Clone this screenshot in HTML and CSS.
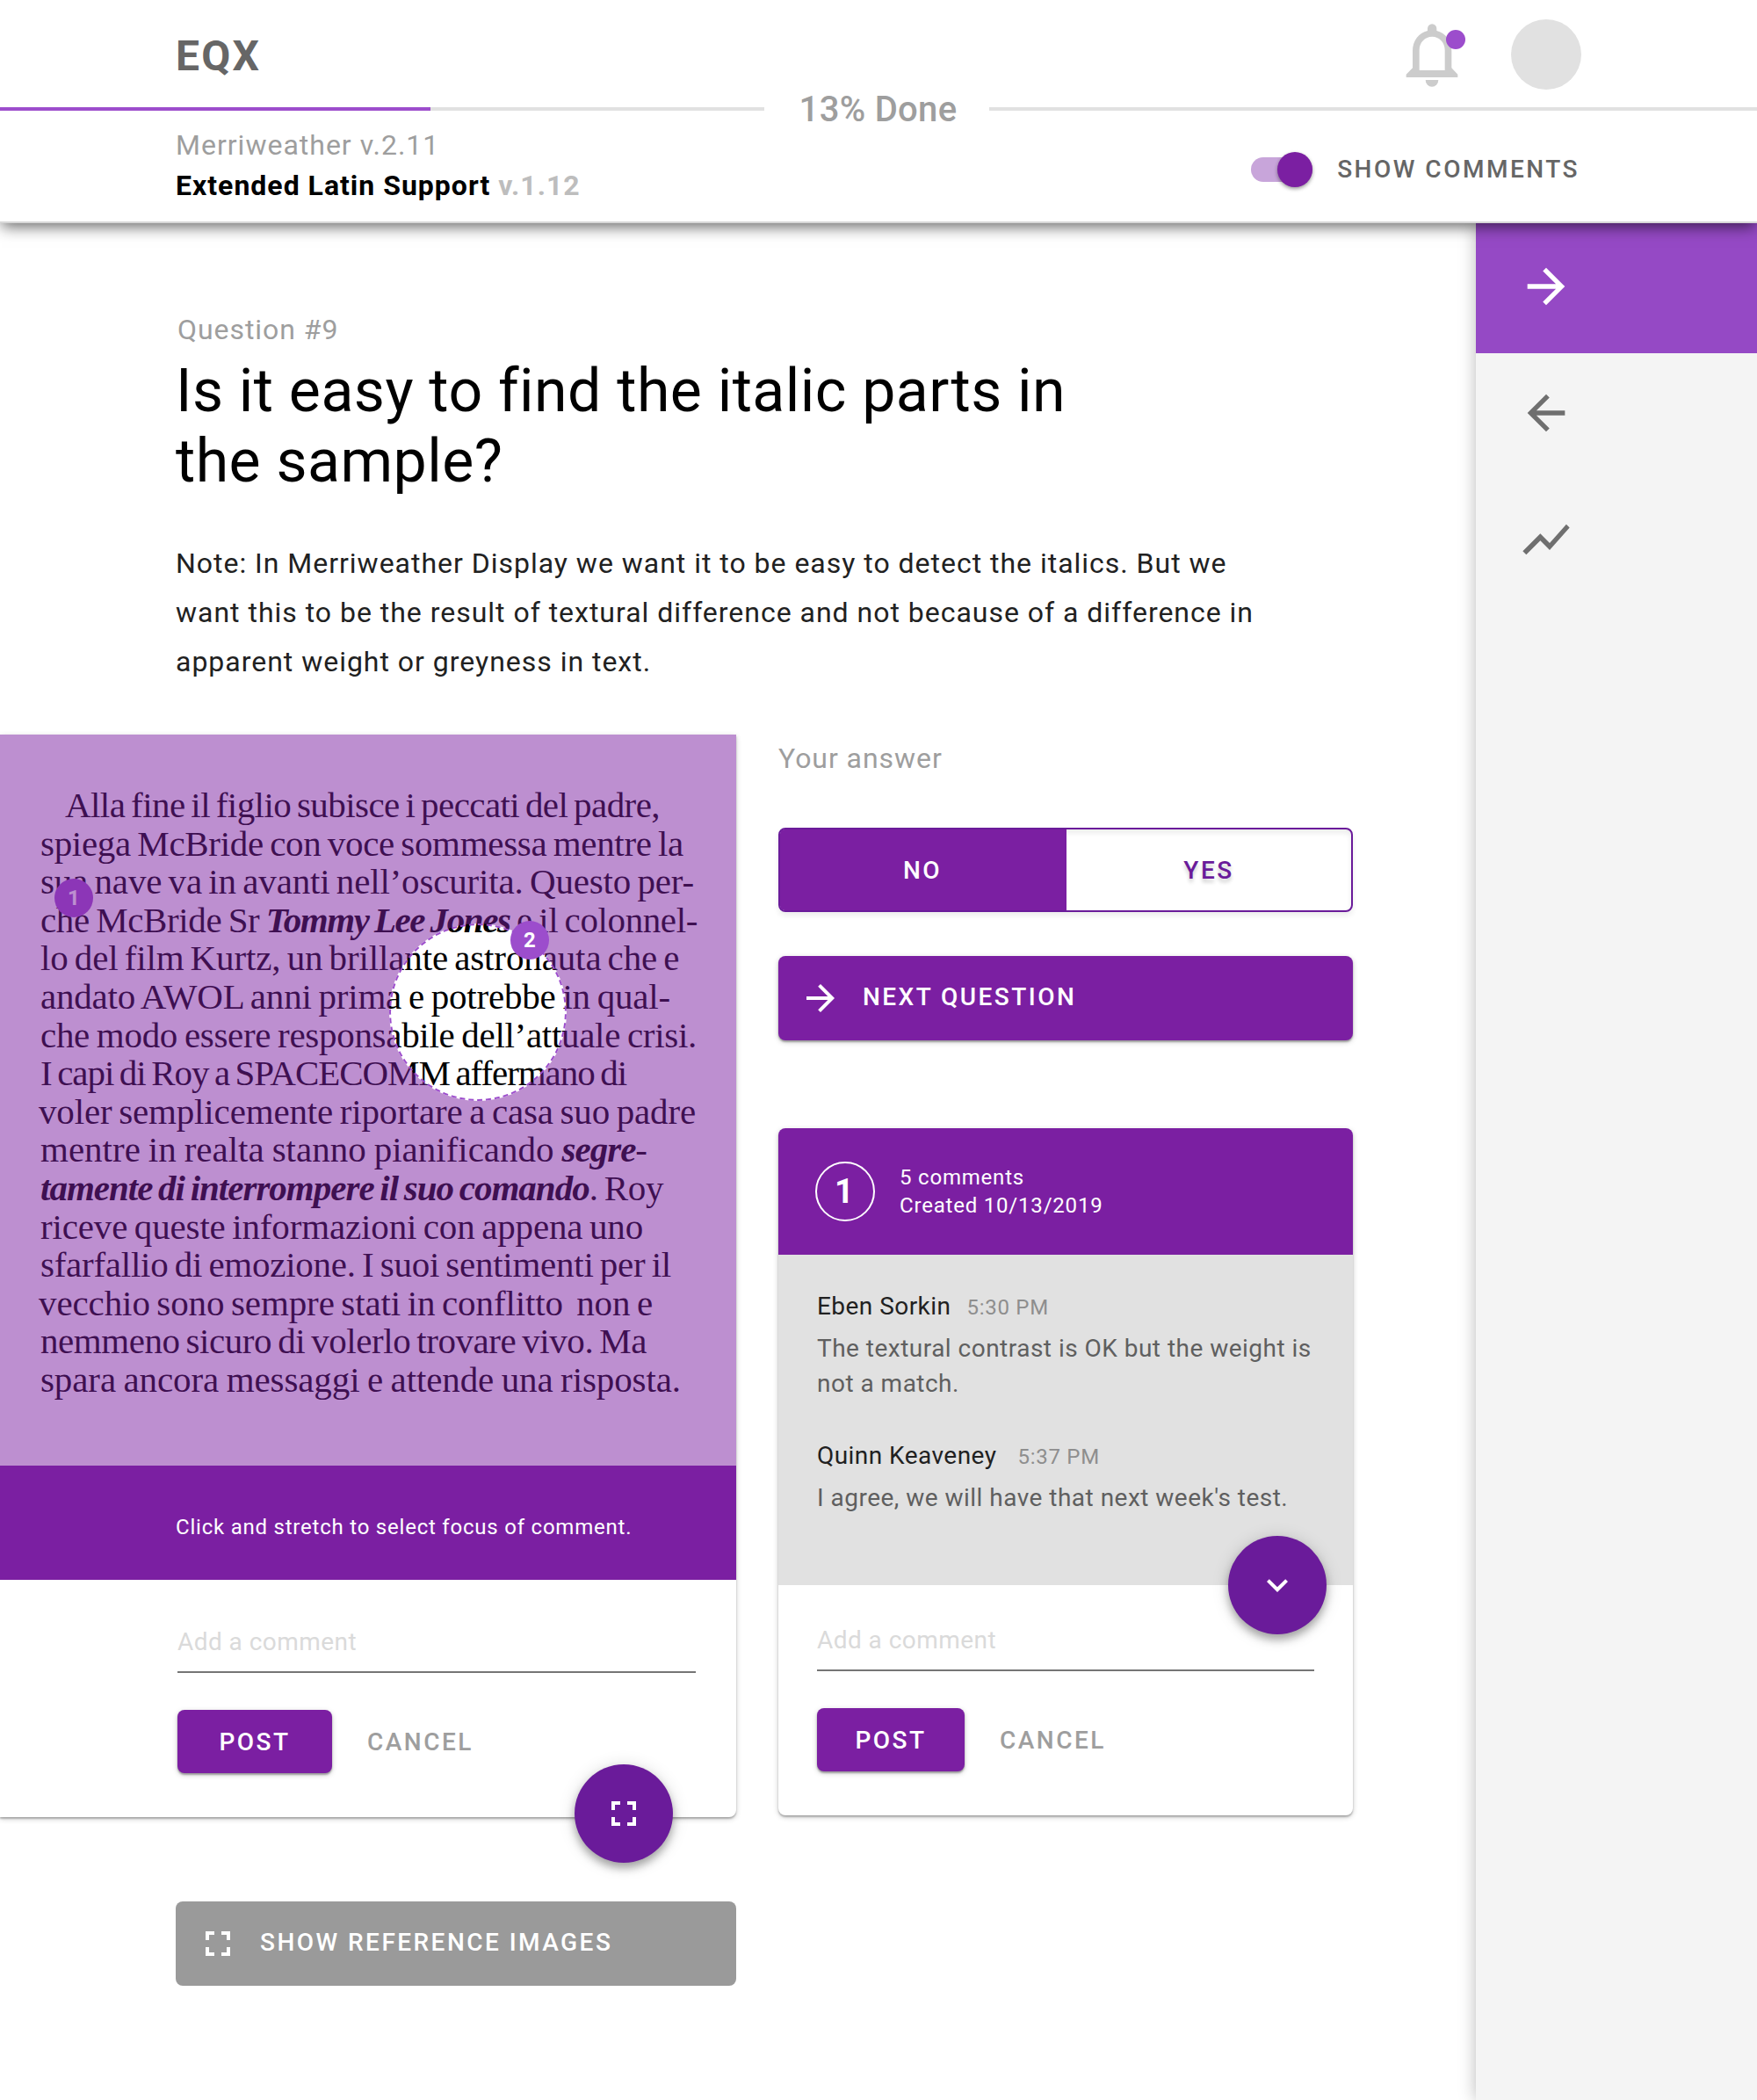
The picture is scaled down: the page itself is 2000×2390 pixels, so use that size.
FILE: index.html
```html
<!DOCTYPE html>
<html lang="en">
<head>
<meta charset="utf-8">
<title>EQX – Question 9</title>
<link rel="stylesheet" href="styles.css">
</head>
<body>
<header class="header">
  <div class="header-top">
    <div class="logo">EQX</div>
    <div class="bell">
      <svg width="60" height="74" viewBox="30 30 180 222"><path fill="#ccc" fill-rule="evenodd" d="M32 216V206L54 184V125C54 92 75 64 105 57V49a15.500 15.500 0 0 1 31 0V57C166 64 187 92 187 125V184L208 206V216ZM77 192H164V122C164 97 145 77 120.500 77S77 97 77 122Z"/><path fill="#ccc" d="M98 225h44a22 23 0 0 1-44 0z"/></svg>
      <span class="bell-dot"></span>
    </div>
    <div class="avatar"></div>
  </div>
  <div class="progress">
    <div class="track track-left"><div class="track-fill"></div></div>
    <div class="progress-label">13% Done</div>
    <div class="track"></div>
  </div>
  <div class="header-bottom">
    <div class="versions">
      <div class="family">Merriweather v.2.11</div>
      <div class="project">Extended Latin Support <span class="project-version">v.1.12</span></div>
    </div>
    <div class="comments-toggle">
      <span class="switch"><span class="switch-thumb"></span></span>
      <span class="switch-label">SHOW COMMENTS</span>
    </div>
  </div>
</header>
<div class="page">
  <main class="content">
    <div class="question-number">Question #9</div>
    <h1 class="question">Is it easy to find the italic parts in<br>the sample?</h1>
    <p class="note">Note: In Merriweather Display we want it to be easy to detect the italics. But we<br>want this to be the result of textural difference and not because of a difference in<br>apparent weight or greyness in text.</p>
    <div class="columns">
      <section class="left">
        <div class="card sample-card">
          <div class="sample">
            <div class="sample-text">
              <div class="line" style="margin-left:28px;width:677px;letter-spacing:-.57px">Alla fine il figlio subisce i peccati del padre,</div>
              <div class="line" style="width:732px;letter-spacing:-.3px">spiega McBride con voce sommessa mentre la</div>
              <div class="line" style="width:744px;letter-spacing:-.17px">sua nave va in avanti nell’oscurita. Questo per-</div>
              <div class="line" style="width:748px;letter-spacing:-.38px">che McBride Sr <em class="name">Tommy Lee Jones</em> e il colonnel-</div>
              <div class="line" style="width:727px;letter-spacing:-.12px">lo del film Kurtz, un brillante astronauta che e</div>
              <div class="line" style="width:717px;letter-spacing:-.2px">andato AWOL anni prima e potrebbe in qual-</div>
              <div class="line" style="width:747px;letter-spacing:-.3px">che modo essere responsabile dell’attuale crisi.</div>
              <div class="line" style="width:667px;letter-spacing:-1.050px">I capi di Roy a SPACECOMM affermano di</div>
              <div class="line" style="margin-left:-2px;width:748px;letter-spacing:-.15px">voler semplicemente riportare a casa suo padre</div>
              <div class="line" style="width:691px;letter-spacing:0">mentre in realta stanno pianificando <em>segre</em>-</div>
              <div class="line" style="width:709px;letter-spacing:-.4px"><em>tamente di interrompere il suo comando</em>. Roy</div>
              <div class="line" style="width:686px;letter-spacing:-.15px">riceve queste informazioni con appena uno</div>
              <div class="line" style="width:718px;letter-spacing:-.25px">sfarfallio di emozione. I suoi sentimenti per il</div>
              <div class="line" style="margin-left:-2px;width:699px;letter-spacing:-.1px">vecchio sono sempre stati in conflitto&nbsp; non e</div>
              <div class="line" style="width:690px;letter-spacing:-.45px">nemmeno sicuro di volerlo trovare vivo. Ma</div>
              <div class="line" style="width:729px;letter-spacing:-.1px">spara ancora messaggi e attende una risposta.</div>
            </div>
            <span class="marker marker-one">1</span>
            <div class="spotlight"></div>
            <span class="marker marker-two">2</span>
          </div>
          <div class="caption">Click and stretch to select focus of comment.</div>
          <div class="form form-left">
            <div class="field">Add a comment</div>
            <div class="actions">
              <button class="post">POST</button>
              <button class="cancel">CANCEL</button>
            </div>
          </div>
          <div class="fab fab-expand"><svg class="icon" viewBox="0 0 24 24"><path d="M7 14H5v5h5v-2H7v-3zm-2-4h2V7h3V5H5v5zm12 7h-3v2h5v-5h-2v3zM14 5v2h3v3h2V5h-5z"/></svg></div>
        </div>
        <button class="wide-button reference">
          <svg class="icon" viewBox="0 0 24 24"><path d="M7 14H5v5h5v-2H7v-3zm-2-4h2V7h3V5H5v5zm12 7h-3v2h5v-5h-2v3zM14 5v2h3v3h2V5h-5z"/></svg>
          <span class="wide-label">SHOW REFERENCE IMAGES</span>
        </button>
      </section>
      <section class="right">
        <div class="answer-label">Your answer</div>
        <div class="answer">
          <div class="option option-no">NO</div>
          <div class="option option-yes">YES</div>
        </div>
        <button class="wide-button next">
          <svg class="icon" viewBox="0 0 24 24"><path d="M12 4l-1.410 1.410L16.170 11H4v2h12.170l-5.580 5.590L12 20l8-8z"/></svg>
          <span class="wide-label">NEXT QUESTION</span>
        </button>
        <div class="card thread">
          <div class="thread-head">
            <div class="thread-number">1</div>
            <div class="thread-meta">5 comments<br>Created 10/13/2019</div>
          </div>
          <div class="thread-body">
            <div class="author">Eben Sorkin<span class="time">5:30 PM</span></div>
            <div class="message">The textural contrast is OK but the weight is<br>not a match.</div>
            <div class="author author-next">Quinn Keaveney<span class="time time-next">5:37 PM</span></div>
            <div class="message message-next">I agree, we will have that next week's test.</div>
          </div>
          <div class="form form-right">
            <div class="field">Add a comment</div>
            <div class="actions">
              <button class="post">POST</button>
              <button class="cancel">CANCEL</button>
            </div>
          </div>
          <div class="fab fab-more"><svg class="icon" viewBox="0 0 24 24"><path d="M16.590 8.590L12 13.170 7.410 8.590 6 10l6 6 6-6z"/></svg></div>
        </div>
      </section>
    </div>
  </main>
  <nav class="sidebar">
    <div class="side-item side-active"><svg class="side-icon" viewBox="0 0 24 24"><path d="M12 4l-1.410 1.410L16.170 11H4v2h12.170l-5.580 5.590L12 20l8-8z"/></svg></div>
    <div class="side-item"><svg class="side-icon" viewBox="0 0 24 24"><path d="M20 11H7.830l5.590-5.590L12 4l-8 8 8 8 1.410-1.410L7.830 13H20v-2z"/></svg></div>
    <div class="side-item"><svg class="side-icon" viewBox="0 0 24 24"><path d="M3.500 18.490l6-6.010 4 4L22 6.920l-1.410-1.410-7.090 7.970-4-4L2 16.990z"/></svg></div>
  </nav>
</div>
</body>
</html>
```
FILE: styles.css
```css
* { box-sizing: border-box; }

body {
  margin: 0;
  width: 2000px;
  height: 2390px;
  overflow: hidden;
  background: #fff;
  font-family: Roboto, "Liberation Sans", sans-serif;
  font-size: 28px;
  color: #212121;
}

button {
  border: 0;
  padding: 0;
  background: none;
  font: inherit;
}

/* Header */
.header {
  position: relative;
  z-index: 2;
  height: 254px;
  background: #fff;
  border-bottom: 2px solid #d8d8d8;
  box-shadow: 0 6px 16px -2px rgba(0, 0, 0, .6);
}
.header-top {
  display: flex;
  align-items: center;
  height: 102px;
  padding: 22px 200px 0;
}
.logo {
  flex: 1;
  margin-top: 3px;
  font-size: 48px;
  font-weight: 700;
  line-height: 56px;
  letter-spacing: 2.2px;
  color: #666;
}
.bell { position: relative; width: 60px; height: 74px; margin: 2px 60px 0 0; }
.bell svg { display: block; }
.bell-dot {
  position: absolute;
  left: 46px;
  top: 8px;
  width: 22px;
  height: 22px;
  border-radius: 50%;
  background: #9c4dcc;
}
.avatar { width: 80px; height: 80px; border-radius: 50%; background: #e1e1e1; }

.progress { display: flex; align-items: center; height: 44px; }
.track { flex: 1; height: 4px; background: #e1e1e1; }
.track-left { flex: none; width: 870px; }
.track-fill { width: 490px; height: 4px; background: #9c4dcc; }
.progress-label {
  width: 256px;
  padding: 2px 0 0 3px;
  text-align: center;
  font-size: 40px;
  font-weight: 500;
  line-height: 44px;
  letter-spacing: .3px;
  color: #9e9e9e;
}

.header-bottom {
  display: flex;
  justify-content: space-between;
  padding: 0 202px 0 200px;
  font-size: 32px;
  line-height: 38px;
}
.family { letter-spacing: 1px; color: #9e9e9e; }
.project { margin-top: 8px; font-weight: 700; letter-spacing: 1px; color: #000; }
.project-version { color: #bdbdbd; }
.comments-toggle { display: flex; align-items: center; height: 40px; margin-top: 27px; }
.switch {
  display: flex;
  align-items: center;
  justify-content: flex-end;
  width: 70px;
  height: 28px;
  border-radius: 14px;
  background: #c8a5da;
}
.switch-thumb {
  width: 40px;
  height: 40px;
  border-radius: 50%;
  background: #7b1fa2;
  box-shadow: 0 2px 4px rgba(0, 0, 0, .4);
}
.switch-label {
  margin-left: 28px;
  font-size: 28px;
  font-weight: 500;
  letter-spacing: 2.5px;
  color: #666;
}

/* Page */
.page { display: flex; height: 2136px; }
.content { width: 1680px; padding-top: 102px; }
.sidebar {
  width: 320px;
  background: #f4f4f4;
  box-shadow: 0 0 18px rgba(0, 0, 0, .28);
}
.side-item { display: flex; align-items: center; height: 144px; padding-left: 48px; fill: #6f6f6f; }
.side-active { height: 148px; margin-bottom: -4px; padding-bottom: 4px; background: #9549c5; fill: #fff; }
.side-icon { width: 64px; height: 64px; }

.question-number {
  margin-left: 202px;
  font-size: 32px;
  line-height: 38px;
  letter-spacing: .95px;
  color: #9e9e9e;
}
.question {
  margin: 11px 0 0 200px;
  font-size: 68px;
  font-weight: 400;
  line-height: 80px;
  letter-spacing: .46px;
  color: #000;
}
.note {
  margin: 48px 0 55px 200px;
  font-size: 32px;
  line-height: 56px;
  letter-spacing: .98px;
}
.columns { display: flex; gap: 48px; }
.left { width: 838px; }
.right { width: 654px; }

.card {
  position: relative;
  background: #fff;
  border-radius: 8px;
  box-shadow: 0 2px 2px rgba(0, 0, 0, .24), 0 2px 6px rgba(0, 0, 0, .2);
}
.sample-card { border-radius: 0 0 8px 0; }

/* Type sample with the dimming layer and its spotlight */
.sample {
  position: relative;
  height: 832px;
  padding: 59px 0 0 46px;
  overflow: hidden;
  background: #fff;
}
.line {
  height: 43.6px;
  font-family: "Liberation Serif", serif;
  font-size: 41px;
  line-height: 43.6px;
  word-spacing: -3px;
  white-space: nowrap;
  text-align: justify;
  text-align-last: justify;
  color: #000;
}
.line em { font-weight: 700; letter-spacing: -1px; }
.line .name { letter-spacing: -1.4px; }
.spotlight {
  position: absolute;
  left: 443px;
  top: 215px;
  width: 202px;
  height: 202px;
  border: 2px dashed #9c4dcc;
  border-radius: 50%;
  box-shadow: 0 0 0 1200px rgba(123, 31, 162, .5);
}
.marker {
  position: absolute;
  width: 44px;
  height: 44px;
  border-radius: 50%;
  background: #9c4dcc;
  color: #fff;
  font-size: 24px;
  font-weight: 700;
  line-height: 44px;
  text-align: center;
}
.marker-one { left: 62px; top: 164px; }
.marker-two { left: 581px; top: 212px; }

.caption {
  height: 130px;
  padding: 10px 0 0 200px;
  background: #7b1fa2;
  color: #fff;
  font-size: 24px;
  line-height: 120px;
  letter-spacing: .78px;
}

/* Comment forms */
.form-left { padding: 54px 46px 50px 202px; }
.form-right { padding: 46px 44px 50px; }
.field {
  padding-bottom: 16px;
  border-bottom: 2px solid #757575;
  line-height: 34px;
  letter-spacing: .45px;
  color: #dadada;
}
.actions { display: flex; gap: 40px; margin-top: 42px; }
.post, .cancel { height: 72px; font-weight: 500; letter-spacing: 2.5px; }
.post {
  width: 168px;
  border-radius: 8px;
  background: #7b1fa2;
  color: #fff;
  box-shadow: 0 2px 2px rgba(0, 0, 0, .3), 0 2px 6px rgba(0, 0, 0, .2);
}
.form-left .post { width: 176px; }
.cancel { color: #9e9e9e; }

.icon { display: block; width: 48px; height: 48px; fill: #fff; }
.fab {
  position: absolute;
  display: flex;
  align-items: center;
  justify-content: center;
  width: 112px;
  height: 112px;
  border-radius: 50%;
  background: #6a1b9a;
  box-shadow: 0 6px 10px rgba(0, 0, 0, .3), 0 2px 20px rgba(0, 0, 0, .14);
}
.fab-expand { left: 654px; bottom: -52px; }
.fab-more { right: 30px; top: 464px; }

.wide-button {
  display: flex;
  align-items: center;
  gap: 24px;
  height: 96px;
  padding-left: 24px;
  border-radius: 8px;
  color: #fff;
  font-weight: 500;
  letter-spacing: 2.46px;
}
.wide-label { margin-bottom: 3px; }
.reference { width: 638px; margin: 96px 0 0 200px; background: #9a9a9a; }
.next {
  width: 654px;
  margin-top: 50px;
  background: #7b1fa2;
  box-shadow: 0 2px 2px rgba(0, 0, 0, .3), 0 2px 6px rgba(0, 0, 0, .2);
}

/* Answer */
.answer-label { font-size: 32px; line-height: 54px; letter-spacing: .95px; color: #9e9e9e; }
.answer {
  display: flex;
  height: 96px;
  margin-top: 52px;
  border: 2px solid #6a1b9a;
  border-radius: 8px;
  box-shadow: 0 4px 6px rgba(0, 0, 0, .08), inset 0 4px 6px rgba(0, 0, 0, .08);
}
.option {
  flex: 1;
  padding-top: 1px;
  font-weight: 500;
  line-height: 92px;
  letter-spacing: 2.5px;
  text-align: center;
}
.option-no {
  flex: none;
  width: 326px;
  padding-right: 2px;
  border-radius: 5px 0 0 5px;
  background: #7b1fa2;
  color: #fff;
}
.option-yes { color: #6a1b9a; text-shadow: 0 4px 4px rgba(0, 0, 0, .2); }

/* Thread */
.thread { margin-top: 100px; }
.thread-head {
  display: flex;
  align-items: center;
  gap: 28px;
  height: 144px;
  padding-left: 42px;
  border-radius: 8px 8px 0 0;
  background: #7b1fa2;
  color: #fff;
}
.thread-number {
  width: 68px;
  height: 68px;
  padding-right: 2px;
  border: 2px solid #fff;
  border-radius: 50%;
  font-size: 38px;
  font-weight: 700;
  line-height: 65px;
  text-align: center;
}
.thread-meta { font-size: 24px; line-height: 32px; letter-spacing: .8px; }
.thread-body { height: 376px; padding: 39px 0 0 44px; background: #e1e1e1; line-height: 40px; }
.author { letter-spacing: .45px; }
.author-next { margin-top: 42px; }
.time { margin-left: 18px; font-size: 24px; letter-spacing: .75px; color: #8e8e8e; }
.time-next { margin-left: 24px; }
.message { margin-top: 7px; letter-spacing: .48px; color: #5f5f5f; }
```
